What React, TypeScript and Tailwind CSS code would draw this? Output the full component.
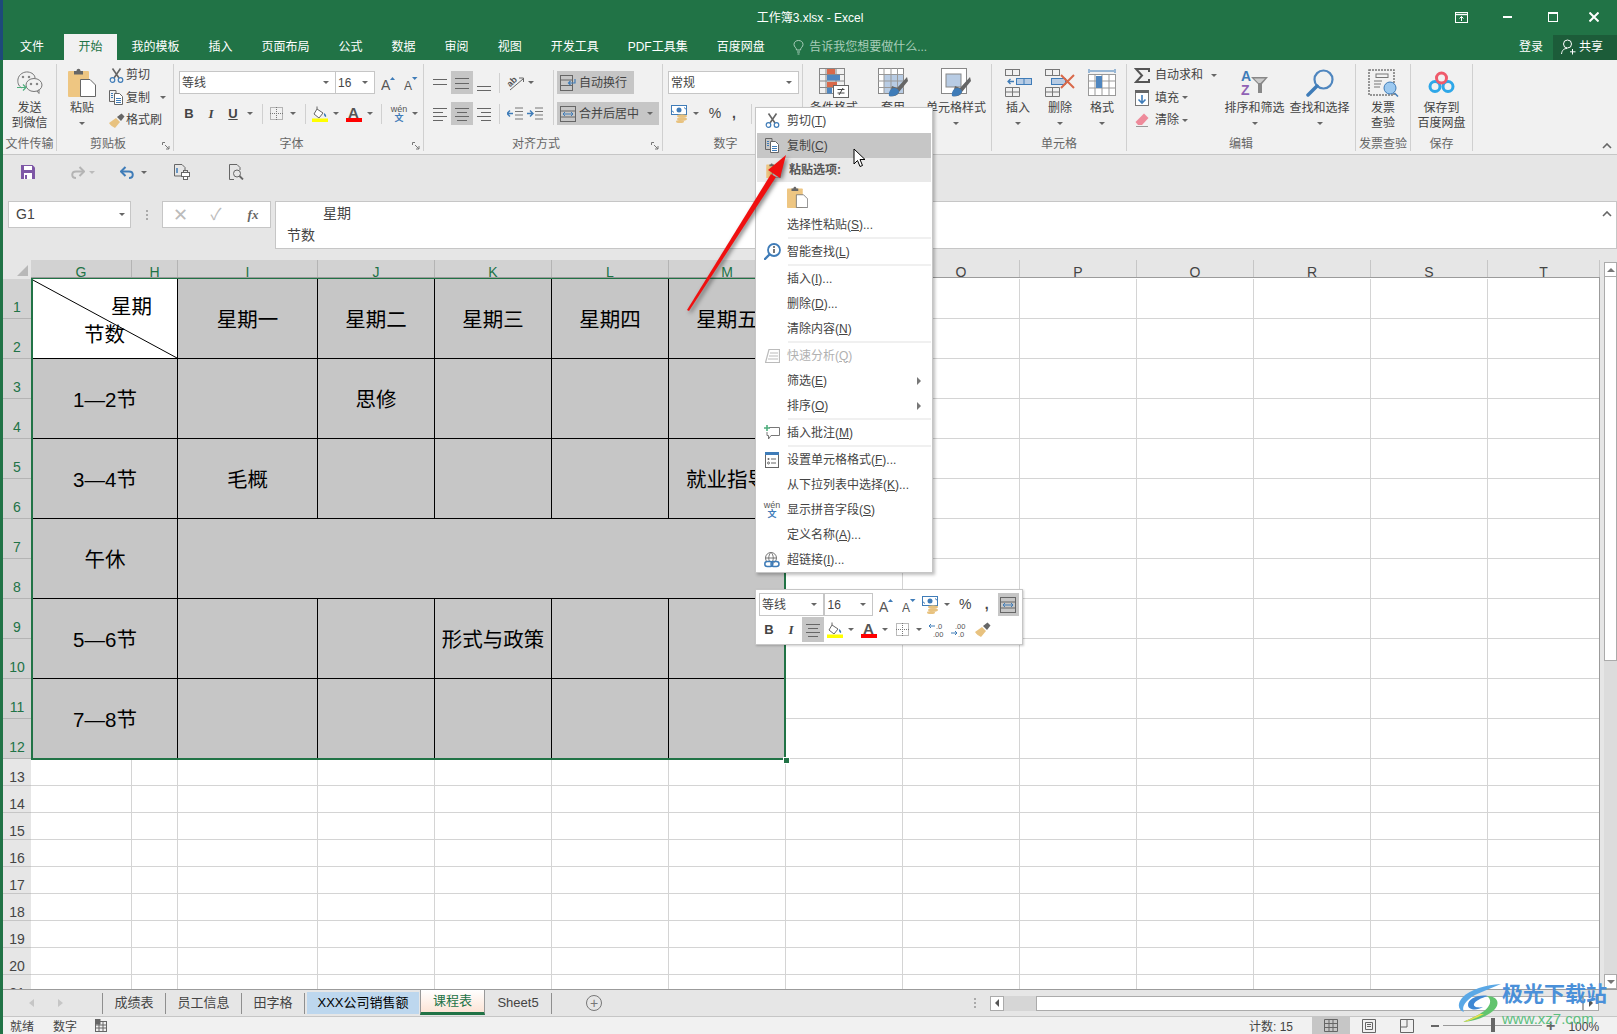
import type { ReactNode } from 'react'

const Caret = ({ className = '' }: { className?: string }) => (
  <span className={`inline-block w-0 h-0 border-x-[3px] border-t-[3px] border-x-transparent border-t-[#666] ${className}`} />
)

const Launcher = () => (
  <svg width="8" height="8" viewBox="0 0 8 8" className="absolute right-[3px] bottom-[1px]">
    <path d="M0.5 3V0.5H3M3 3L7 7M7 4V7H4" fill="none" stroke="#777" strokeWidth="1" />
  </svg>
)

const Sep = ({ className = '' }: { className?: string }) => <div className={`w-px bg-[#d0d0d0] ${className}`} />

function Group({ label, className, launcher, children }: { label: string; className: string; launcher?: boolean; children: ReactNode }) {
  return (
    <div className={`relative flex flex-col h-[87px] mt-1 border-r border-[#d0d0d0] shrink-0 ${className}`}>
      <div className="flex h-[73px]">{children}</div>
      <div className={`h-[14px] leading-[14px] text-center whitespace-nowrap text-[#666] ${launcher ? 'pr-[14px]' : ''}`}>{label}</div>
      {launcher && <Launcher />}
    </div>
  )
}

function BigButton({ icon, lines, caret, className = '' }: { icon: ReactNode; lines: string[]; caret?: boolean; className?: string }) {
  return (
    <div className={`flex flex-col items-center shrink-0 ${className}`}>
      <div className="h-[37px] flex items-center justify-center">{icon}</div>
      {lines.map(l => (
        <div key={l} className="leading-[15px] whitespace-nowrap">{l}</div>
      ))}
      {caret && (
        <div className="h-[15px] flex items-center">
          <Caret />
        </div>
      )}
    </div>
  )
}

function AlignIcon({ rows, mode }: { rows: number[]; mode: 'l' | 'c' | 'r' | 'w' }) {
  return (
    <svg width="14" height="16" viewBox="0 0 14 16">
      {rows.map((y, i) => {
        const short = mode !== 'w' && i % 2 === 1
        const x1 = mode === 'r' && short ? 4 : mode === 'c' && short ? 2 : 0
        const x2 = mode === 'l' && short ? 10 : mode === 'c' && short ? 12 : 14
        return <line key={y} x1={x1} x2={x2} y1={y + 0.5} y2={y + 0.5} stroke="#666" />
      })}
    </svg>
  )
}

const Scissors = () => (
  <svg width="15" height="15" viewBox="0 0 15 15" fill="none">
    <path d="M3.5 0.5L10 10M11.5 0.5L5 10" stroke="#666" strokeWidth="1.6" />
    <circle cx="3.5" cy="12" r="2.3" stroke="#3f7cb8" strokeWidth="1.2" />
    <circle cx="11.5" cy="12" r="2.3" stroke="#3f7cb8" strokeWidth="1.2" />
  </svg>
)

const CopyIcon = () => (
  <svg width="15" height="15" viewBox="0 0 15 15" fill="none" stroke="#666">
    <path d="M5 11.5H0.5V0.5H7V3" />
    <path d="M5.5 3.5H10.5L13.5 6.5V14.5H5.5Z" fill="#fff" />
    <path d="M7 8.5H12M7 10.5H12M7 12.5H12M2 3.5H4M2 5.5H4M2 7.5H4" stroke="#3f7cb8" />
  </svg>
)

const BrushIcon = () => (
  <svg width="17" height="15" viewBox="0 0 17 15">
    <path d="M1 10L8 5L12 9L7 15C5 14 2 12 1 10Z" fill="#e8c27f" />
    <path d="M9 4L13 8L16.5 3.5L13.5 0.5Z" fill="#666" />
  </svg>
)

const Clipboard = ({ w, h }: { w: number; h: number }) => (
  <svg width={w} height={h} viewBox="0 0 28 29">
    <rect x="0" y="3" width="21" height="26" rx="1" fill="#eec682" />
    <path d="M6 3H8.5C8.5 0 12.5 0 12.5 3H15V6.5H6Z" fill="#666" />
    <path d="M12.5 11.5H22L27.5 17V28.5H12.5Z" fill="#fff" stroke="#666" />
  </svg>
)

const GrowFont = ({ down }: { down?: boolean }) => (
  <svg width="14" height="16" viewBox="0 0 14 16">
    <text x="0" y="15" fontSize={down ? 12 : 14} fill="#555">A</text>
    <path d={down ? 'M8 2H13.5L10.7 5Z' : 'M9 5H14L11.5 2Z'} fill="#3f7cb8" />
  </svg>
)

const BorderIcon = () => (
  <svg width="13" height="13" viewBox="0 0 13 13" fill="none" stroke="#777" strokeDasharray="1 1">
    <rect x="0.5" y="0.5" width="12" height="12" />
    <path d="M0 6.5H13M6.5 0V13" />
  </svg>
)

const FillIcon = () => (
  <svg width="16" height="16" viewBox="0 0 16 16">
    <path d="M5 3L11 7L7 12L2 8Z" fill="#fff" stroke="#666" />
    <path d="M5 3V0.5" stroke="#666" />
    <path d="M12 7C14 8 14.5 10 14 11C13 11 11.5 9.5 12 7Z" fill="#3f7cb8" />
    <rect x="0" y="12.5" width="16" height="3.5" fill="#ffff00" />
  </svg>
)

const FontColor = () => (
  <svg width="16" height="17" viewBox="0 0 16 17">
    <text x="2" y="12.5" fontSize="15" fontWeight="bold" fill="#555">A</text>
    <rect x="0" y="13" width="16" height="4" fill="#ff0000" />
  </svg>
)

const Wen = () => (
  <div className="flex flex-col items-center leading-[9px] text-[9px] w-[18px]">
    <span className="text-[#555]">wén</span>
    <span className="text-[#3f7cb8] font-bold">文</span>
  </div>
)

const Currency = () => (
  <svg width="17" height="18" viewBox="0 0 17 18">
    <rect x="0.5" y="0.5" width="15" height="9" fill="#fff" stroke="#3f7cb8" />
    <circle cx="8" cy="5" r="2.5" fill="#3f7cb8" />
    <path d="M3 7.5L0 5M13 2.5L16 5" stroke="#3f7cb8" />
    <ellipse cx="11" cy="11" rx="5" ry="1.8" fill="#e8c27f" />
    <ellipse cx="11" cy="14" rx="5" ry="1.8" fill="#e8c27f" />
    <ellipse cx="9" cy="16.5" rx="4" ry="1.5" fill="#e8c27f" />
  </svg>
)

const CondFormat = () => (
  <svg width="30" height="30" viewBox="0 0 30 30">
    <g fill="none" stroke="#888">
      <rect x="0.5" y="0.5" width="25" height="25" />
      <path d="M0 6.5H26M0 13H26M0 19.5H26M7 0V26M17 0V26" />
    </g>
    <rect x="8" y="1" width="8" height="5" fill="#d9694a" />
    <rect x="8" y="7" width="13" height="5.5" fill="#4f86bf" />
    <rect x="8" y="14" width="10" height="5" fill="#d9694a" />
    <rect x="8" y="20" width="5" height="5.5" fill="#4f86bf" />
    <rect x="14.5" y="17.5" width="15" height="12" fill="#fff" stroke="#666" />
    <path d="M18.5 21.5H25.5M18.5 25H25.5M20 27L24 20" stroke="#444" fill="none" />
  </svg>
)

const TableFormat = () => (
  <svg width="30" height="30" viewBox="0 0 30 30">
    <rect x="0.5" y="0.5" width="25" height="25" fill="#fff" stroke="#888" />
    <rect x="6" y="7" width="19" height="18" fill="#b8cce4" />
    <path d="M0 6.5H26M0 13H26M0 19.5H26M6 0V26M13 0V26M19.5 0V26" stroke="#999" fill="none" />
    <path d="M29 9L19 20L14 18L11 28C15 29 20 28 21 24L30 13Z" fill="#666" />
    <path d="M11 28C10 24 13 20 16 20C19 20 21 22 21 24C19 28 14 29 11 28Z" fill="#3f7cb8" />
  </svg>
)

const CellStyle = () => (
  <svg width="30" height="30" viewBox="0 0 30 30">
    <rect x="0.5" y="0.5" width="25" height="25" fill="#fff" stroke="#888" />
    <rect x="5" y="6" width="15" height="13" fill="#b8cce4" stroke="#888" />
    <path d="M29 9L19 20L14 18L11 28C15 29 20 28 21 24L30 13Z" fill="#666" />
    <path d="M11 28C10 24 13 20 16 20C19 20 21 22 21 24C19 28 14 29 11 28Z" fill="#3f7cb8" />
  </svg>
)

const InsertCell = () => (
  <svg width="27" height="28" viewBox="0 0 27 28" fill="none" stroke="#777">
    <rect x="0.5" y="0.5" width="14" height="6" />
    <path d="M7.5 0V6M0.5 18.5H14.5V27.5H0.5ZM0 23H15M7.5 18V27" />
    <rect x="11.5" y="9.5" width="15" height="6" fill="#b8cce4" stroke="#3f7cb8" />
    <path d="M19 9V16" stroke="#3f7cb8" />
    <path d="M9 12.5H3M5.5 10L3 12.5L5.5 15" stroke="#3f7cb8" strokeWidth="1.3" />
  </svg>
)

const DeleteCell = () => (
  <svg width="31" height="28" viewBox="0 0 31 28" fill="none" stroke="#777">
    <rect x="0.5" y="0.5" width="14" height="6" />
    <path d="M7.5 0V6M0.5 18.5H14.5V27.5H0.5ZM0 23H15M7.5 18V27" />
    <rect x="6.5" y="9.5" width="14" height="6" fill="#b8cce4" stroke="#3f7cb8" />
    <path d="M16 6L29 19M29 6L16 19" stroke="#d9694a" strokeWidth="2" />
  </svg>
)

const FormatCell = () => (
  <svg width="28" height="30" viewBox="0 0 28 30" fill="none" stroke="#999">
    <path d="M1 1V5M27 1V5M2 3H26" stroke="#3f7cb8" />
    <rect x="0.5" y="6.5" width="27" height="21" fill="#fff" />
    <path d="M0 13H28M0 20H28M7 6V28M14 6V28M21 6V28" />
    <rect x="8" y="8" width="6" height="12" fill="#4f86bf" stroke="none" />
  </svg>
)

const Sigma = () => (
  <svg width="16" height="15" viewBox="0 0 16 15">
    <path d="M15 4V1H2L8 7.5L2 14H15V11" fill="none" stroke="#555" strokeWidth="2" />
  </svg>
)

const FillDown = () => (
  <svg width="14" height="16" viewBox="0 0 14 16">
    <rect x="0.5" y="0.5" width="13" height="15" fill="#fff" stroke="#777" />
    <rect x="0" y="0" width="14" height="3" fill="#666" />
    <path d="M7 5V13M3.5 9.5L7 13L10.5 9.5" fill="none" stroke="#3f7cb8" strokeWidth="1.6" />
  </svg>
)

const Eraser = () => (
  <svg width="14" height="14" viewBox="0 0 14 14">
    <path d="M9 0.5L13.5 5L7 12H3L0.5 9Z" fill="#ee8a9a" />
    <path d="M1 13.5H13" stroke="#999" />
  </svg>
)

const SortIcon = () => (
  <div className="flex items-start">
    <div className="flex flex-col font-bold text-[14px] leading-[14px]">
      <span className="text-[#3f7cb8]">A</span>
      <span className="text-[#9062b5]">Z</span>
    </div>
    <svg width="17" height="16" viewBox="0 0 17 16" className="mt-[8px]">
      <path d="M0 0H17L11 7V16H7V7Z" fill="#888" />
      <path d="M3 1.5H14L9.5 6H7.5Z" fill="#ccc" />
    </svg>
  </div>
)

const FindIcon = () => (
  <svg width="28" height="28" viewBox="0 0 28 28" fill="none">
    <circle cx="17.5" cy="10.5" r="9" stroke="#4f86bf" strokeWidth="2.2" />
    <path d="M11 17L2 26" stroke="#3f7cb8" strokeWidth="3.5" strokeLinecap="round" />
  </svg>
)

const InvoiceIcon = () => (
  <svg width="31" height="28" viewBox="0 0 31 28" fill="none">
    <rect x="1" y="1" width="25" height="25" stroke="#777" strokeWidth="1.5" strokeDasharray="2 1" />
    <rect x="8" y="5" width="12" height="3.5" stroke="#777" />
    <path d="M6 12H14M6 15H13M6 18H12" stroke="#777" />
    <circle cx="22" cy="19" r="6" fill="#9cc9f0" stroke="#3f7cb8" />
    <path d="M26.5 24L30 27.5" stroke="#3f7cb8" strokeWidth="1.5" />
  </svg>
)

const BaiduIcon = () => (
  <svg width="27" height="23" viewBox="0 0 27 23" fill="none">
    <circle cx="7" cy="15.5" r="5" stroke="#2ea7e8" strokeWidth="3" />
    <circle cx="20" cy="15.5" r="5" stroke="#2ea7e8" strokeWidth="3" />
    <circle cx="13.5" cy="7" r="5" stroke="#ef5a6b" strokeWidth="3" />
  </svg>
)

const WeChatIcon = () => (
  <svg width="26" height="23" viewBox="0 0 26 23" fill="none" stroke="#777">
    <path d="M5 17C1 15 0.5 11 1 8C2 3 7 0.5 11 1C15 1.5 18 4 18 7" />
    <ellipse cx="17" cy="14" rx="8" ry="6.5" />
    <path d="M20 20L22 22.5V18.5" />
    <circle cx="6" cy="6" r="0.8" fill="#777" />
    <circle cx="12" cy="6" r="0.8" fill="#777" />
    <circle cx="14" cy="13" r="0.8" fill="#777" />
    <circle cx="20" cy="13" r="0.8" fill="#777" />
    <path d="M0 16.5H9M6 13.5L9 16.5L6 19.5" stroke="#4fae7d" strokeWidth="1.2" />
  </svg>
)

const OrientIcon = () => (
  <svg width="17" height="16" viewBox="0 0 17 16" fill="none">
    <text x="1" y="11" fontSize="9" fontWeight="bold" fill="#555" transform="rotate(-45 4 9)">ab</text>
    <path d="M3 15L16 4M12 3H16.5V7" stroke="#666" />
  </svg>
)

const IndentIcon = ({ out }: { out?: boolean }) => (
  <svg width="16" height="13" viewBox="0 0 16 13" fill="none">
    <path d="M8 1H16M8 4.5H16M8 8H16M8 12H16" stroke="#777" />
    <path d={out ? 'M6 6.5H0M3 3.5L0 6.5L3 9.5' : 'M0 6.5H6M3 3.5L6 6.5L3 9.5'} stroke="#3f7cb8" strokeWidth="1.4" />
  </svg>
)

const WrapIcon = () => (
  <svg width="16" height="16" viewBox="0 0 16 16" fill="none" stroke="#666">
    <rect x="0.5" y="0.5" width="12" height="15" />
    <path d="M0 5H12M0 10.5H12" />
    <path d="M9 8H15V4M10.5 6L8.5 8L10.5 10" stroke="#3f7cb8" strokeWidth="1.2" />
  </svg>
)

const MergeIcon = () => (
  <svg width="16" height="16" viewBox="0 0 16 16" fill="none" stroke="#666">
    <rect x="0.5" y="0.5" width="15" height="15" />
    <path d="M0 5H16M0 11H16" />
    <path d="M3 8H13M5 6L3 8L5 10M11 6L13 8L11 10" stroke="#3f7cb8" />
  </svg>
)

const SmartLookup = () => (
  <svg width="17" height="17" viewBox="0 0 17 17" fill="none">
    <circle cx="10" cy="7" r="6" stroke="#3f7cb8" strokeWidth="1.8" />
    <path d="M5.5 11.5L1 16" stroke="#3f7cb8" strokeWidth="2.4" strokeLinecap="round" />
    <path d="M10 6V10" stroke="#555" strokeWidth="1.6" />
    <circle cx="10" cy="4" r="1" fill="#555" />
  </svg>
)

const QuickAnalysis = () => (
  <svg width="15" height="14" viewBox="0 0 15 14" fill="none" stroke="#bbb">
    <path d="M4 0.5H14.5V13.5H0.5Z" strokeWidth="1.2" />
    <path d="M5 4H13M4 7H13M3 10H13" />
  </svg>
)

const CommentIcon = () => (
  <svg width="16" height="15" viewBox="0 0 16 15" fill="none">
    <path d="M5 2.5H15.5V10.5H7L4.5 14V10.5H3V7" stroke="#777" />
    <path d="M3 0V6M0 3H6" stroke="#4fae7d" strokeWidth="1.6" />
  </svg>
)

const CellFormatIcon = () => (
  <svg width="14" height="16" viewBox="0 0 14 16" fill="none">
    <rect x="0.5" y="0.5" width="13" height="15" stroke="#666" />
    <rect x="0" y="0" width="14" height="3" fill="#3f7cb8" />
    <circle cx="3.5" cy="7" r="1" fill="#666" />
    <path d="M6 7H11M6 11H11" stroke="#666" />
    <circle cx="3.5" cy="11" r="1" stroke="#666" />
  </svg>
)

const LinkIcon = () => (
  <svg width="16" height="16" viewBox="0 0 16 16" fill="none">
    <circle cx="7" cy="6" r="5.5" stroke="#777" />
    <path d="M1.5 6H12.5M7 0.5C4 3 4 9 7 11.5M7 0.5C10 3 10 9 7 11.5" stroke="#777" />
    <rect x="0.8" y="9.5" width="8" height="5" rx="2.5" fill="#fff" stroke="#3f7cb8" strokeWidth="1.5" />
    <rect x="7" y="9.5" width="8" height="5" rx="2.5" stroke="#3f7cb8" strokeWidth="1.5" />
  </svg>
)

const DecimalIcon = ({ more }: { more?: boolean }) => (
  <svg width="16" height="14" viewBox="0 0 16 14">
    <text x={more ? 4 : 7} y="6" fontSize="7.5" fill="#555">{more ? '.00' : '.0'}</text>
    <text x={more ? 7 : 4} y="13.5" fontSize="7.5" fill="#555">{more ? '.0' : '.00'}</text>
    <path d={more ? 'M0 10H6M4 8L6 10L4 12' : 'M6 3H0M2 1L0 3L2 5'} fill="none" stroke="#3f7cb8" />
  </svg>
)

function SaveIcon() {
  return (
    <svg width="14" height="14" viewBox="0 0 14 14">
      <path d="M0 0H11.5L14 2.5V14H0Z" fill="#7e57a6" />
      <rect x="3" y="1" width="8" height="4" fill="#fff" />
      <rect x="3" y="8" width="8" height="6" fill="#fff" />
      <rect x="4" y="10" width="2" height="4" fill="#7e57a6" />
    </svg>
  )
}

function UndoIcon({ redo }: { redo?: boolean }) {
  return (
    <svg width="14" height="13" viewBox="0 0 14 13" fill="none" className={redo ? '-scale-x-100' : ''}>
      <path d="M1.5 5.5H9C14 5.5 14 12 9 12" stroke={redo ? '#b4b4b4' : '#3f7cb8'} strokeWidth="2" />
      <path d="M5.5 1L1 5.5L5.5 10" stroke={redo ? '#b4b4b4' : '#3f7cb8'} strokeWidth="2" />
    </svg>
  )
}

const PrintPreviewIcon = () => (
  <svg width="16" height="16" viewBox="0 0 16 16" fill="none" stroke="#666">
    <path d="M8 12H0.5V0.5H8L11 3.5V6" />
    <rect x="7.5" y="8.5" width="8" height="4" fill="#fff" />
    <rect x="9.5" y="6.5" width="4" height="2" />
    <rect x="9.5" y="12.5" width="4" height="3" fill="#fff" />
    <path d="M3 4V9" stroke="#3f7cb8" strokeWidth="1.5" />
  </svg>
)

const FilePreviewIcon = () => (
  <svg width="15" height="16" viewBox="0 0 15 16" fill="none" stroke="#666">
    <path d="M5 15.5H0.5V0.5H8L11 3.5V6" />
    <circle cx="8" cy="9.5" r="3.5" />
    <path d="M10.5 12L14 15.5" strokeWidth="1.8" />
  </svg>
)

const Combo = ({ text, className, caretClass = '' }: { text: string; className: string; caretClass?: string }) => (
  <div className={`flex items-center justify-between bg-white border border-[#c6c6c6] pl-[2px] pr-[6px] h-[23px] ${className}`}>
    <span>{text}</span>
    <Caret className={caretClass} />
  </div>
)

function Ribbon() {
  return (
    <div className="flex h-[95px] bg-[#f1f1f1] border-b border-[#c6c6c6] text-[12px] text-[#444]">
      <Group label="文件传输" className="w-[54px]">
        <BigButton className="w-[53px]" icon={<WeChatIcon />} lines={['发送', '到微信']} />
      </Group>

      <Group label="剪贴板" className="w-[117px]" launcher>
        <BigButton className="w-[50px]" icon={<Clipboard w={28} h={29} />} lines={['粘贴']} caret />
        <div className="flex flex-col">
          {[
            { icon: <Scissors />, text: '剪切' },
            { icon: <CopyIcon />, text: '复制', caret: true },
            { icon: <BrushIcon />, text: '格式刷' },
          ].map(r => (
            <div key={r.text} className="flex items-center h-[22.5px]">
              <div className="w-[18px] flex justify-center">{r.icon}</div>
              <span className="ml-[1px]">{r.text}</span>
              {r.caret && <Caret className="ml-[10px]" />}
            </div>
          ))}
        </div>
      </Group>

      <Group label="字体" className="w-[250px]" launcher>
        <div className="flex flex-col pt-[7px] gap-[8px]">
          <div className="flex items-center pl-[5px]">
            <Combo text="等线" className="w-[157px]" />
            <Combo text="16" className="w-[40px] -ml-px" />
            <div className="ml-[6px]"><GrowFont /></div>
            <div className="ml-[9px]"><GrowFont down /></div>
          </div>
          <div className="flex items-center h-[23px]">
            <div className="w-[22px] ml-[4px] text-center font-bold text-[13px]">B</div>
            <div className="w-[22px] text-center italic font-bold text-[13px] font-['Liberation_Serif',serif]">I</div>
            <div className="w-[22px] text-center font-bold text-[13px] underline">U</div>
            <div className="w-[12px] flex justify-center"><Caret /></div>
            <Sep className="h-[20px] ml-[6px]" />
            <div className="ml-[7px]"><BorderIcon /></div>
            <div className="w-[20px] flex justify-center"><Caret /></div>
            <Sep className="h-[20px] ml-[2px]" />
            <div className="ml-[6px]"><FillIcon /></div>
            <div className="w-[16px] flex justify-center"><Caret /></div>
            <div className="ml-[2px]"><FontColor /></div>
            <div className="w-[16px] flex justify-center"><Caret /></div>
            <Sep className="h-[20px] ml-[3px]" />
            <div className="ml-[8px]"><Wen /></div>
            <div className="w-[14px] flex justify-center"><Caret /></div>
          </div>
        </div>
      </Group>

      <Group label="对齐方式" className="w-[239px]" launcher>
        <div className="flex flex-col pt-[7px] gap-[8px] w-[129px]">
          <div className="flex items-center h-[23px]">
            <div className="ml-[9px]"><AlignIcon rows={[4, 9]} mode="w" /></div>
            <div className="ml-[4px] w-[22px] h-[23px] bg-[#c6c6c6] flex items-center justify-center"><AlignIcon rows={[3, 8, 13]} mode="w" /></div>
            <div className="ml-[4px]"><AlignIcon rows={[11, 15]} mode="w" /></div>
            <Sep className="h-[20px] ml-[8px]" />
            <div className="ml-[7px]"><OrientIcon /></div>
            <Caret className="ml-[4px]" />
          </div>
          <div className="flex items-center h-[23px]">
            <div className="ml-[9px]"><AlignIcon rows={[2, 6, 10, 14]} mode="l" /></div>
            <div className="ml-[4px] w-[22px] h-[23px] bg-[#c6c6c6] flex items-center justify-center"><AlignIcon rows={[2, 6, 10, 14]} mode="c" /></div>
            <div className="ml-[4px]"><AlignIcon rows={[2, 6, 10, 14]} mode="r" /></div>
            <Sep className="h-[20px] ml-[8px]" />
            <div className="ml-[7px]"><IndentIcon out /></div>
            <div className="ml-[4px]"><IndentIcon /></div>
          </div>
        </div>
        <Sep className="h-[55px] mt-[6px]" />
        <div className="flex flex-col pt-[7px] gap-[8px] ml-[3px]">
          <div className="flex items-center gap-[3px] w-[77px] h-[23px] px-[3px] bg-[#c6c6c6]">
            <WrapIcon />
            <span>自动换行</span>
          </div>
          <div className="flex items-center gap-[3px] w-[102px] h-[23px] px-[3px] bg-[#c6c6c6]">
            <MergeIcon />
            <span>合并后居中</span>
            <Caret className="ml-[5px]" />
          </div>
        </div>
      </Group>

      <Group label="数字" className="w-[140px]" launcher>
        <div className="flex flex-col pt-[7px] gap-[8px]">
          <Combo text="常规" className="w-[131px] ml-[5px]" />
          <div className="flex items-center h-[23px]">
            <div className="ml-[8px]"><Currency /></div>
            <div className="w-[16px] flex justify-center"><Caret /></div>
            <div className="w-[20px] ml-px text-center text-[14px]">%</div>
            <div className="w-[14px] ml-[2px] text-center text-[14px] font-bold">,</div>
            <Sep className="h-[20px] ml-[10px]" />
          </div>
        </div>
      </Group>

      <Group label="样式" className="w-[189px]">
        <BigButton className="w-[62px]" icon={<CondFormat />} lines={['条件格式']} caret />
        <BigButton className="w-[56px]" icon={<TableFormat />} lines={['套用', '表格格式']} />
        <BigButton className="w-[70px]" icon={<CellStyle />} lines={['单元格样式']} caret />
      </Group>

      <Group label="单元格" className="w-[135px]">
        <BigButton className="w-[42px] ml-[5px]" icon={<InsertCell />} lines={['插入']} caret />
        <BigButton className="w-[42px]" icon={<DeleteCell />} lines={['删除']} caret />
        <BigButton className="w-[42px]" icon={<FormatCell />} lines={['格式']} caret />
      </Group>

      <Group label="编辑" className="w-[229px]">
        <div className="flex flex-col w-[95px] pl-[7px]">
          {[
            { icon: <Sigma />, text: '自动求和', gap: 'ml-[8px]' },
            { icon: <FillDown />, text: '填充', gap: 'ml-[3px]' },
            { icon: <Eraser />, text: '清除', gap: 'ml-[3px]' },
          ].map(r => (
            <div key={r.text} className="flex items-center h-[22.5px]">
              <div className="w-[16px] flex justify-center">{r.icon}</div>
              <span className="ml-[5px]">{r.text}</span>
              <Caret className={r.gap} />
            </div>
          ))}
        </div>
        <BigButton className="w-[65px]" icon={<SortIcon />} lines={['排序和筛选']} caret />
        <BigButton className="w-[65px]" icon={<FindIcon />} lines={['查找和选择']} caret />
      </Group>

      <Group label="发票查验" className="w-[55px]">
        <BigButton className="w-[54px]" icon={<InvoiceIcon />} lines={['发票', '查验']} />
      </Group>

      <Group label="保存" className="w-[62px]">
        <BigButton className="w-[61px]" icon={<BaiduIcon />} lines={['保存到', '百度网盘']} />
      </Group>

      <div className="flex-1 flex items-end justify-end pr-[5px] pb-[5px]">
        <svg width="10" height="6" viewBox="0 0 10 6" fill="none">
          <path d="M1 5L5 1L9 5" stroke="#666" strokeWidth="1.6" />
        </svg>
      </div>
    </div>
  )
}

const RIBBON_TABS = ['开始', '我的模板', '插入', '页面布局', '公式', '数据', '审阅', '视图', '开发工具', 'PDF工具集', '百度网盘']

function TitleBar() {
  return (
    <div className="bg-[#217346] text-white text-[12px]">
      <div className="h-[34px] grid grid-cols-3 items-center">
        <div />
        <div className="text-center pt-px">工作簿3.xlsx - Excel</div>
        <div className="flex justify-end items-center">
          <div className="w-[46px] flex justify-center">
            <svg width="13" height="11" viewBox="0 0 13 11" fill="none" stroke="#fff">
              <rect x="0.5" y="0.5" width="12" height="10" />
              <path d="M0 2.5H13" strokeWidth="1.4" />
              <path d="M6.5 9V4.5M4.5 6.5L6.5 4.5L8.5 6.5" />
            </svg>
          </div>
          <div className="w-[46px] flex justify-center">
            <div className="w-[9px] h-[2px] bg-white" />
          </div>
          <div className="w-[46px] flex justify-center">
            <div className="w-[10px] h-[10px] border border-white border-t-[2px]" />
          </div>
          <div className="w-[36px] mr-[5px] flex justify-center">
            <svg width="10" height="10" viewBox="0 0 10 10">
              <path d="M0.5 0.5L9.5 9.5M9.5 0.5L0.5 9.5" stroke="#fff" strokeWidth="2" />
            </svg>
          </div>
        </div>
      </div>
      <div className="h-[26px] flex items-stretch">
        <div className="flex items-center pl-[17px] pr-[20px]">文件</div>
        {RIBBON_TABS.map(t => (
          <div
            key={t}
            className={t === '开始' ? 'flex items-center px-[14.5px] bg-[#f1f1f1] text-[#217346]' : 'flex items-center px-[14.5px]'}
          >
            {t}
          </div>
        ))}
        <div className="flex items-center ml-[14px] text-[#a8cdb9]">
          <svg width="11" height="15" viewBox="0 0 11 15" fill="none" stroke="#a8cdb9" className="mr-[5px]">
            <path d="M3.5 10C3.5 7.5 1 7 1 4.5C1 2 3 0.5 5.5 0.5C8 0.5 10 2 10 4.5C10 7 7.5 7.5 7.5 10ZM4 12H7M4.5 14H6.5" />
          </svg>
          告诉我您想要做什么...
        </div>
        <div className="ml-auto flex items-center">
          <span className="mr-[10px]">登录</span>
          <div className="w-[64px] h-[25px] bg-[#1c5c39] flex items-center pl-[8px] gap-[3px]">
            <svg width="15" height="16" viewBox="0 0 15 16" fill="none" stroke="#fff">
              <circle cx="6.5" cy="5" r="4" />
              <path d="M0.5 15C1 11 3 9.5 6 9.5M11.5 10V15.5M9 12.8H14.5" />
            </svg>
            <span>共享</span>
          </div>
        </div>
      </div>
    </div>
  )
}

function QuickAccess() {
  return (
    <div className="h-[46px] flex items-center pb-[12px] pl-[18px]">
      <SaveIcon />
      <div className="ml-[36px]"><UndoIcon redo /></div>
      <Caret className="ml-[4px] border-t-[#bbb]" />
      <div className="ml-[25px]"><UndoIcon /></div>
      <Caret className="ml-[7px]" />
      <div className="ml-[27px]"><PrintPreviewIcon /></div>
      <div className="ml-[39px]"><FilePreviewIcon /></div>
    </div>
  )
}

function FormulaBar() {
  return (
    <div className="h-[48px] mb-[11px] flex text-[#444]">
      <div className="ml-[5px] w-[123px] h-[27px] bg-white border border-[#c6c6c6] flex items-center justify-between pl-[7px] pr-[5px] text-[14px]">
        <span>G1</span>
        <Caret className="border-x-4 border-t-4" />
      </div>
      <div className="w-[31px] h-[27px] flex flex-col items-center justify-center gap-[2px]">
        <div className="w-[2px] h-[2px] bg-[#aaa]" />
        <div className="w-[2px] h-[2px] bg-[#aaa]" />
        <div className="w-[2px] h-[2px] bg-[#aaa]" />
      </div>
      <div className="w-[109px] h-[27px] bg-white border border-[#c6c6c6] flex items-center">
        <span className="w-[32px] ml-[1px] text-center text-[#bbb] text-[18px] leading-none">✕</span>
        <span className="w-[40px] text-center text-[#bbb] text-[16px] leading-none">✓</span>
        <span className="w-[34px] text-center text-[#666] italic font-bold text-[13px] font-['Liberation_Serif',serif]">fx</span>
      </div>
      <div className="relative ml-[4px] flex-1 h-[48px] bg-white border border-[#c6c6c6] text-[14px] leading-[22px]">
        <div className="pl-[47px]">星期</div>
        <div className="pl-[11px]">节数</div>
        <svg width="10" height="6" viewBox="0 0 10 6" fill="none" className="absolute right-[4px] top-[9px]">
          <path d="M1 5L5 1L9 5" stroke="#666" strokeWidth="1.6" />
        </svg>
      </div>
    </div>
  )
}

const COLUMNS = ['G', 'H', 'I', 'J', 'K', 'L', 'M', 'N', 'O', 'P', 'Q', 'R', 'S', 'T']
const ROWS = Array.from({ length: 21 }, (_, i) => i + 1)
const TABLE_ROWS: { head: string; cells: string[] }[] = [
  { head: '1—2节', cells: ['', '思修', '', '', ''] },
  { head: '3—4节', cells: ['毛概', '', '', '', '就业指导'] },
]
const TABLE_ROWS_2: { head: string; cells: string[] }[] = [
  { head: '5—6节', cells: ['', '', '形式与政策', '', ''] },
  { head: '7—8节', cells: ['', '', '', '', ''] },
]

const Blank = ({ n }: { n: number }) => (
  <>
    {Array.from({ length: n }, (_, i) => (
      <div key={i} className="border-r border-b border-[#d4d4d4]" />
    ))}
  </>
)

const TCell = ({ children, className = '' }: { children?: ReactNode; className?: string }) => (
  <div className={`row-span-2 flex items-center justify-center pt-[4px] bg-[#c6c6c6] border-r border-b border-black text-black whitespace-nowrap ${className}`}>
    {children}
  </div>
)

// rows 1-12 hold the timetable, each table row spans two sheet rows
function SheetGrid() {
  const rowCells = (rows: { head: string; cells: string[] }[]) =>
    rows.map(r => (
      <div key={r.head} className="contents">
        <TCell className="col-span-2 pl-[2px]">{r.head}</TCell>
        {r.cells.map((c, i) => (
          <TCell key={i}>{c}</TCell>
        ))}
        <Blank n={14} />
      </div>
    ))

  return (
    <div className="relative w-[1570px] h-[712px] overflow-hidden bg-white border-t border-r border-[#9b9b9b]">
      <div className="pt-px grid grid-cols-[101px_46px_140px_117px_repeat(9,117px)_112px] grid-rows-[repeat(12,40px)_repeat(9,27px)] text-[20.5px]">
        <div className="relative col-span-2 row-span-2 bg-white border-r border-b border-black text-black">
          <svg className="absolute inset-0" width="146" height="79" viewBox="0 0 146 79">
            <line x1="0" y1="0" x2="146" y2="79" stroke="#000" />
          </svg>
          <div className="absolute left-[80px] top-[16px] leading-[24px]">星期</div>
          <div className="absolute left-[53px] top-[44px] leading-[24px]">节数</div>
        </div>
        {['星期一', '星期二', '星期三', '星期四', '星期五'].map(t => (
          <TCell key={t}>{t}</TCell>
        ))}
        <Blank n={14} />
        {rowCells(TABLE_ROWS)}
        <TCell className="col-span-2 pl-[2px]">午休</TCell>
        <TCell className="col-span-5" />
        <Blank n={14} />
        {rowCells(TABLE_ROWS_2)}
        <Blank n={14 * 9} />
      </div>
      {/* selection around G1:M12 */}
      <div className="absolute left-0 top-[-1px] w-[755px] h-[483px] border-2 border-[#217346] pointer-events-none" />
      <div className="absolute left-[752px] top-[479px] w-[7px] h-[7px] bg-[#217346] border border-white" />
    </div>
  )
}

function Sheet() {
  return (
    <div className="flex h-[729px]">
      <div className="w-[1597px] flex flex-col">
        <div className="flex h-[17px] text-[14px]">
          <div className="w-[28px] bg-[#e6e6e6] flex items-end justify-end pr-[3px] pb-[1px]">
            <div className="w-0 h-0 border-l-[11px] border-t-[11px] border-l-transparent border-t-transparent border-b-0 border-r-[11px] border-r-[#b8b8b8]" />
          </div>
          <div className="grid grid-cols-[101px_46px_140px_117px_repeat(9,117px)_112px]">
            {COLUMNS.map((c, i) => (
              <div
                key={c}
                className={
                  i < 7
                    ? 'flex items-center justify-center pt-[2px] bg-[#d2d2d2] border-r border-[#b4b4b4] text-[#217346]'
                    : 'flex items-center justify-center pt-[2px] bg-[#e6e6e6] border-r border-[#c6c6c6] text-[#444]'
                }
              >
                {c}
              </div>
            ))}
          </div>
        </div>
        <div className="flex">
          <div className="w-[28px] h-[712px] overflow-hidden pt-[2px] grid grid-rows-[repeat(12,40px)_repeat(9,27px)] text-[14px]">
            {ROWS.map(r => (
              <div
                key={r}
                className={
                  r <= 12
                    ? 'flex items-end justify-center bg-[#d2d2d2] border-b border-[#b4b4b4] text-[#217346]'
                    : 'flex items-end justify-center leading-[15px] bg-[#e6e6e6] border-b border-[#c6c6c6] text-[#444]'
                }
              >
                {r}
              </div>
            ))}
          </div>
          <SheetGrid />
        </div>
      </div>
      <div className="w-[13px] ml-[4px] mt-[2px] h-[727px] flex flex-col bg-[#dcdcdc]">
        <div className="h-[15px] bg-white border border-[#ababab] flex items-center justify-center">
          <span className="w-0 h-0 border-x-4 border-b-4 border-x-transparent border-b-[#777]" />
        </div>
        <div className="h-[384px] bg-white border-x border-b border-[#ababab]" />
        <div className="flex-1" />
        <div className="h-[15px] bg-white border border-[#ababab] flex items-center justify-center">
          <span className="w-0 h-0 border-x-4 border-t-4 border-x-transparent border-t-[#777]" />
        </div>
      </div>
    </div>
  )
}

const SheetTab = ({ name }: { name: string }) => (
  <div className="h-[21px] flex items-center px-[11.5px] border-r border-[#8f8f8f]">{name}</div>
)

function SheetTabs() {
  return (
    <div className="h-[28px] bg-[#e6e6e6] border-t border-b border-t-[#9b9b9b] border-b-[#c6c6c6] flex items-center text-[13px] text-[#444]">
      <div className="w-[100px] flex items-center pl-[26px] gap-[24px] border-r border-[#8f8f8f] h-[21px]">
        <span className="w-0 h-0 border-y-4 border-r-[5px] border-y-transparent border-r-[#c6c6c6]" />
        <span className="w-0 h-0 border-y-4 border-l-[5px] border-y-transparent border-l-[#c6c6c6]" />
      </div>
      <SheetTab name="成绩表" />
      <SheetTab name="员工信息" />
      <SheetTab name="田字格" />
      <div className="h-[22px] ml-[2px] flex items-center w-[112px] justify-center bg-[#bdd7ee] text-black">XXX公司销售额</div>
      <div className="h-[25px] self-start ml-[1px] w-[65px] flex items-center justify-center bg-gradient-to-b from-white to-[#fce4d6] border-b-[3px] border-x border-x-[#999] border-b-[#217346] text-[#217346]">
        课程表
      </div>
      <div className="h-[21px] w-[67px] flex items-center justify-center border-r border-[#8f8f8f]">Sheet5</div>
      <div className="ml-[34px] w-[16px] h-[16px] rounded-full border border-[#777] flex items-center justify-center text-[#777] text-[14px] leading-none">+</div>
      <div className="ml-[372px] flex flex-col gap-[2px]">
        <div className="w-[2px] h-[2px] bg-[#aaa]" />
        <div className="w-[2px] h-[2px] bg-[#aaa]" />
        <div className="w-[2px] h-[2px] bg-[#aaa]" />
      </div>
      <div className="ml-[14px] w-[14px] h-[15px] bg-white border border-[#ababab] flex items-center justify-center">
        <span className="w-0 h-0 border-y-4 border-r-4 border-y-transparent border-r-[#555]" />
      </div>
      <div className="w-[32px] h-[15px] bg-[#d6d6d6]" />
      <div className="w-[547px] h-[15px] bg-white border border-[#ababab]" />
      <div className="w-[16px] h-[15px] bg-white border border-[#ababab] flex items-center justify-center">
        <span className="w-0 h-0 border-y-4 border-l-4 border-y-transparent border-l-[#555]" />
      </div>
    </div>
  )
}

function StatusBar() {
  return (
    <div className="h-[17px] bg-[#f1f1f1] flex items-center text-[12px] text-[#444]">
      <span className="ml-[7px] pt-[2px]">就绪</span>
      <span className="ml-[19px] pt-[2px]">数字</span>
      <svg width="12" height="13" viewBox="0 0 12 13" fill="none" stroke="#666" className="ml-[18px]">
        <rect x="0.5" y="2.5" width="11" height="10" />
        <path d="M0 6H12M0 9H12M4 3V13M8 3V13" />
        <rect x="0" y="0" width="5" height="5" fill="#666" />
      </svg>
      <span className="ml-[1142px] pt-[2px]">计数: 15</span>
      <div className="ml-[19px] w-[38px] h-[17px] bg-[#c6c6c6] flex items-center justify-center">
        <svg width="14" height="13" viewBox="0 0 14 13" fill="none" stroke="#666">
          <path d="M0.5 0.5H13.5V12.5H0.5ZM0 4.5H14M0 8.5H14M5 0V13M9 0V13" />
        </svg>
      </div>
      <svg width="14" height="14" viewBox="0 0 14 14" fill="none" stroke="#666" className="ml-[12px]">
        <path d="M0.5 0.5H13.5V13.5H0.5ZM3.5 3.5H10.5V10.5H3.5ZM5 5.5H9M5 7.5H9" />
      </svg>
      <svg width="14" height="14" viewBox="0 0 14 14" fill="none" stroke="#666" className="ml-[24px]">
        <path d="M0.5 0.5H13.5V13.5H0.5ZM7 0V8H0" />
      </svg>
      <div className="ml-[17px] w-[8px] h-[2px] bg-[#666]" />
      <div className="relative ml-[4px] w-[99px] h-px bg-[#999]">
        <div className="absolute left-[48px] top-[-7px] w-[4px] h-[14px] bg-[#666]" />
      </div>
      <span className="ml-[4px] text-[16px] leading-none text-[#666] font-bold">+</span>
      <span className="ml-[13px] pt-[2px]">100%</span>
    </div>
  )
}

type MenuRow =
  | { kind: 'sep' }
  | { kind: 'item'; label: string; key_: string; tail?: string; icon?: ReactNode; active?: boolean; disabled?: boolean; more?: boolean }

const MENU_TOP: MenuRow[] = [
  { kind: 'item', label: '剪切', key_: 'T', icon: <Scissors /> },
  { kind: 'item', label: '复制', key_: 'C', icon: <CopyIcon />, active: true },
]

const MENU_REST: MenuRow[] = [
  { kind: 'item', label: '选择性粘贴', key_: 'S', tail: '...' },
  { kind: 'sep' },
  { kind: 'item', label: '智能查找', key_: 'L', icon: <SmartLookup /> },
  { kind: 'sep' },
  { kind: 'item', label: '插入', key_: 'I', tail: '...' },
  { kind: 'item', label: '删除', key_: 'D', tail: '...' },
  { kind: 'item', label: '清除内容', key_: 'N' },
  { kind: 'sep' },
  { kind: 'item', label: '快速分析', key_: 'Q', icon: <QuickAnalysis />, disabled: true },
  { kind: 'item', label: '筛选', key_: 'E', more: true },
  { kind: 'item', label: '排序', key_: 'O', more: true },
  { kind: 'sep' },
  { kind: 'item', label: '插入批注', key_: 'M', icon: <CommentIcon /> },
  { kind: 'sep' },
  { kind: 'item', label: '设置单元格格式', key_: 'F', tail: '...', icon: <CellFormatIcon /> },
  { kind: 'item', label: '从下拉列表中选择', key_: 'K', tail: '...' },
  { kind: 'item', label: '显示拼音字段', key_: 'S', icon: <Wen /> },
  { kind: 'item', label: '定义名称', key_: 'A', tail: '...' },
  { kind: 'item', label: '超链接', key_: 'I', tail: '...', icon: <LinkIcon /> },
]

function MenuLine({ row }: { row: MenuRow }) {
  if (row.kind === 'sep') {
    return <div className="h-[2px] ml-[32px] mr-px bg-[#e2e2e2] scale-y-50" />
  }
  return (
    <div
      className={`relative flex items-center h-[25px] mx-px ${row.active ? 'bg-[#c6c6c6]' : ''} ${row.disabled ? 'text-[#b1b1b1]' : ''}`}
    >
      <div className="w-[30px] flex justify-center">{row.icon}</div>
      <span>
        {row.label}(<u>{row.key_}</u>){row.tail}
      </span>
      {row.more && (
        <span className="absolute right-[10px] w-0 h-0 border-y-4 border-l-4 border-y-transparent border-l-[#777]" />
      )}
    </div>
  )
}

function ContextMenu() {
  return (
    <div className="absolute left-[755px] top-[107px] w-[178px] h-[466px] bg-white border border-[#c6c6c6] shadow-[2px_2px_3px_rgba(0,0,0,0.25)] text-[12px] text-[#444]">
      {MENU_TOP.map((r, i) => (
        <MenuLine key={i} row={r} />
      ))}
      <div className="h-[24px] mx-px bg-[#e9e9e9] flex items-center font-bold text-[#555]">
        <div className="w-[32px] flex justify-center"><Clipboard w={15} h={15} /></div>
        粘贴选项:
      </div>
      <div className="h-[30px] pl-[31px] flex items-center">
        <Clipboard w={21} h={22} />
      </div>
      {MENU_REST.map((r, i) => (
        <MenuLine key={i} row={r} />
      ))}
    </div>
  )
}

function MiniToolbar() {
  return (
    <div className="absolute left-[755px] top-[589px] w-[268px] h-[56px] bg-white border border-[#c6c6c6] shadow-[1px_1px_2px_rgba(0,0,0,0.2)] text-[12px] text-[#444] px-[3px] pt-[3px]">
      <div className="flex items-center h-[23px]">
        <Combo text="等线" className="w-[67px]" />
        <Combo text="16" className="w-[50px]" />
        <div className="ml-[6px]"><GrowFont /></div>
        <div className="ml-[9px]"><GrowFont down /></div>
        <div className="ml-[6px]"><Currency /></div>
        <Caret className="ml-[5px]" />
        <div className="w-[20px] ml-[5px] text-center text-[14px]">%</div>
        <div className="w-[12px] ml-[6px] text-center text-[14px] font-bold">,</div>
        <div className="ml-[5px] w-[22px] h-[23px] bg-[#c6c6c6] flex items-center justify-center"><MergeIcon /></div>
      </div>
      <div className="flex items-center h-[25px] mt-px">
        <div className="w-[22px] ml-[-1px] text-center font-bold text-[13px]">B</div>
        <div className="w-[22px] text-center italic font-bold text-[13px] font-['Liberation_Serif',serif]">I</div>
        <div className="w-[22px] h-[25px] bg-[#c6c6c6] flex items-center justify-center"><AlignIcon rows={[2, 6, 10, 14]} mode="c" /></div>
        <div className="ml-[3px]"><FillIcon /></div>
        <div className="w-[16px] flex justify-center"><Caret /></div>
        <div className="ml-[2px]"><FontColor /></div>
        <div className="w-[16px] flex justify-center"><Caret /></div>
        <div className="ml-[3px]"><BorderIcon /></div>
        <div className="w-[20px] flex justify-center"><Caret /></div>
        <DecimalIcon />
        <div className="ml-[6px]"><DecimalIcon more /></div>
        <div className="ml-[7px]"><BrushIcon /></div>
      </div>
    </div>
  )
}

export default function App() {
  return (
    <div className="relative flex w-[1617px] h-[1034px] overflow-hidden font-['Liberation_Sans','Noto_Sans_CJK_SC',sans-serif]">
      <div className="w-[3px] flex flex-col">
        <div className="h-[60px] bg-[#1d4a7a]" />
        <div className="flex-1 bg-[#217346]" />
      </div>
      <div className="flex-1 flex flex-col bg-[#e6e6e6]">
        <TitleBar />
        <Ribbon />
        <QuickAccess />
        <FormulaBar />
        <Sheet />
        <SheetTabs />
        <StatusBar />
      </div>

      <ContextMenu />
      <MiniToolbar />

      {/* red annotation arrow */}
      <svg className="absolute left-[680px] top-[150px] drop-shadow-[2px_2px_2px_rgba(0,0,0,0.5)]" width="120" height="170" viewBox="0 0 120 170">
        <path d="M7 160L9 161L96 27L91 24Z" fill="#f01010" />
        <path d="M106 5L100 28L88 20Z" fill="#f01010" />
      </svg>

      {/* mouse pointer */}
      <svg className="absolute left-[853px] top-[148px]" width="14" height="20" viewBox="0 0 14 20">
        <path d="M1 1V16L4.5 12.5L7 18.5L9.5 17.5L7 11.5H12Z" fill="#fff" stroke="#000" />
      </svg>

      {/* watermark */}
      <div className="absolute left-[1458px] top-[983px] flex pointer-events-none">
        <svg width="44" height="40" viewBox="0 0 44 40">
          <path d="M43 1C28 2 12 6 4 15C-1 21 0 27 6 29C3 24 8 17 17 12C25 8 34 5 43 1Z" fill="#5aa8e6" />
          <path d="M30 13C20 11 10 16 10 22C10 27 19 28 25 24C20 25 15 24 16 21C17 18 23 15 30 13Z" fill="#3f88d4" />
          <path d="M29 13C40 13 43 21 35 28C28 34 17 38 5 39C14 35 26 30 30 24C33 20 33 16 29 13Z" fill="#62c46e" />
          <path d="M5 39C11 36 17 34 22 31L26 31C19 35 12 38 5 39Z" fill="#e6df4f" />
        </svg>
        <div className="flex flex-col">
          <span className="text-[21px] leading-[23px] font-bold text-[#4a90d9] -mt-[1px] whitespace-nowrap">极光下载站</span>
          <span className="text-[15px] leading-[18px] mt-[5px] text-[#5cbf7f]">www.xz7.com</span>
        </div>
      </div>
    </div>
  )
}
